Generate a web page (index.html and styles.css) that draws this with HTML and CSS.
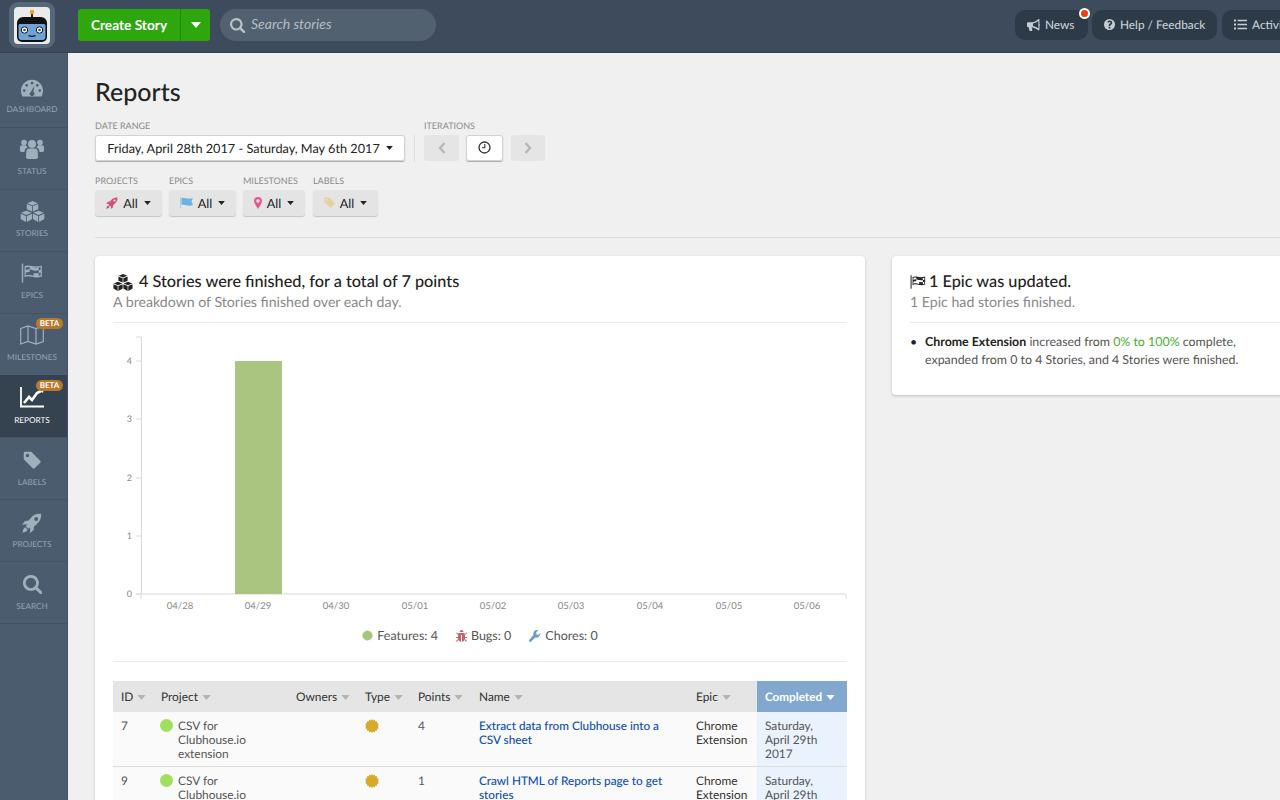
FILE: index.html
```html
<!DOCTYPE html>
<html lang="en">
<head>
<meta charset="utf-8">
<title>Reports</title>
<link rel="stylesheet" href="styles.css">
</head>
<body>
<svg class="sprite" width="0" height="0">
  <defs>
    <symbol id="i-rocket" viewBox="0 0 24 24"><path d="M23 1c-5-.6-9.500 1-13 5.500L8 9 3.500 9.500 0 14l5-.5 1 .8-1.500 1.500 3 3 1.500-1.500.8 1L9.500 24l4.500-3.500.5-4.500 2.500-2C21.500 10.500 23.500 6 23 1zM17 9.500a2.300 2.300 0 1 1 0-4.600 2.300 2.300 0 0 1 0 4.600zM4 17c-2 1-3 3.500-3.500 6.500C3.500 23 6 22 7 20z"/></symbol>
    <symbol id="i-cubes" viewBox="0 0 28 24"><path d="M14 0l6 2.500L14 5 8 2.500zM7.500 3.500L13.500 6v6l-6-2.500zM20.500 3.500L14.500 6v6l6-2.500zM7 11l6 2.500L7 16l-6-2.500zM.5 14.500L6.500 17v7l-6-3.500zM13.500 14.500L7.500 17v7l6-3.500zM21 11l6 2.500L21 16l-6-2.500zM14.500 14.500L20.500 17v7l-6-3.500zM27.500 14.500L21.500 17v7l6-3.500z"/></symbol>
    <symbol id="i-flag" viewBox="0 0 28 24"><path fill-rule="evenodd" d="M1 0h1.800v24H1zM4.500 3.500C10 0 15 6 26.500 2.500v14C17 20 10 13.500 4.500 17.500zM6 5v3.300c2-1 3.500-1.200 5-1V4.400C9.400 4.100 7.800 4.200 6 5zM11 7.300v3.500c2 .3 3.500 1 5 1.300V8.700c-1.700-.4-3.300-1.100-5-1.400zM16 8.700v3.400c2.300.4 4.500.4 6.500-.1V8.600c-2 .5-4.300.5-6.500.1zM22.500 8.600c1-.2 1.700-.4 2.500-.7V4.500c-.8.300-1.600.5-2.500.7zM16 5.300c2 .4 4 .5 6.500 0v-.2C20 5.500 18 5.300 16 5zM6 11.600v3.400c1.800-.8 3.400-1 5-.9v-3.300c-1.700-.2-3.200 0-5 .8zM16 12.100c-1.700-.3-3.300-1-5-1.300v3.300c1.700.3 3.300 1 5 1.400zM22.500 12v3.500c.9-.1 1.700-.4 2.500-.6v-3.500c-.8.300-1.600.5-2.500.6z"/></symbol>
    <symbol id="i-tag" viewBox="0 0 24 24"><path fill-rule="evenodd" d="M1 2.500A1.500 1.500 0 0 1 2.500 1H11l12 12c.7.700.7 1.800 0 2.500L15.500 23c-.7.700-1.800.7-2.500 0L1 11zM6 8.300a2.300 2.300 0 1 0 0-4.600 2.300 2.300 0 0 0 0 4.600z"/></symbol>
    <symbol id="i-search" viewBox="0 0 24 24"><path d="M10 0a10 10 0 1 0 5.700 18.200l5.300 5.300a1.900 1.900 0 0 0 2.700-2.700l-5.300-5.300A10 10 0 0 0 10 0zm0 3.400a6.600 6.600 0 1 1 0 13.200 6.600 6.600 0 0 1 0-13.200z"/></symbol>
    <symbol id="i-burst" viewBox="0 0 24 24"><path d="M12 0l2 2.600L16.600 1l1 3 3.100-.1-.1 3.100 3 1-1.600 2.600L24 12l-2 1.400 1.600 2.600-3 1 .1 3.100-3.100-.1-1 3-2.600-1.600L12 24l-2-2.600L7.400 23l-1-3-3.100.1.100-3.100-3-1L2 13.400 0 12l2-1.400L.4 8l3-1-.1-3.100 3.100.1 1-3L10 2.600z"/></symbol>
    <symbol id="i-caret" viewBox="0 0 10 6"><path d="M0 0h10L5 6z"/></symbol>
  </defs>
</svg>

<header class="topbar">
  <div class="logo">
    <div class="logo-tile">
      <svg class="logo-robot" viewBox="0 0 36 37" width="36" height="37">
        <rect x="17" y="6" width="2" height="5" fill="#222"/>
        <circle cx="18" cy="5" r="2.300" fill="#f39a2b"/>
        <path d="M9 10h18a6 6 0 0 1 6 6v14a5 5 0 0 1-5 5H8a5 5 0 0 1-5-5V16a6 6 0 0 1 6-6z" fill="#111"/>
        <path d="M6 17h24a1.500 1.500 0 0 1 1.500 1.500V30a3 3 0 0 1-3 3h-21a3 3 0 0 1-3-3V18.500A1.500 1.500 0 0 1 6 17z" fill="#6fa3d8"/>
        <circle cx="10.500" cy="23" r="3.200" fill="#fff" stroke="#111" stroke-width="1"/>
        <circle cx="25.500" cy="23" r="3.200" fill="#fff" stroke="#111" stroke-width="1"/>
        <circle cx="10.500" cy="23" r="1.300" fill="#355"/>
        <circle cx="25.500" cy="23" r="1.300" fill="#355"/>
        <path d="M14.500 28.500c2 1 5 1 7 0" fill="none" stroke="#111" stroke-width="1.200"/>
      </svg>
    </div>
  </div>
  <div class="create">
    <span class="create-label">Create Story</span>
    <span class="create-drop"><svg class="caret-white" width="10" height="6"><use href="#i-caret"/></svg></span>
  </div>
  <div class="search">
    <svg class="search-icon" width="15" height="15"><use href="#i-search"/></svg>
    <span>Search stories</span>
  </div>
  <div class="top-right">
    <div class="pill pill-news">
      <svg class="pill-icon" width="13" height="12" viewBox="0 0 24 22"><path d="M23 8.500V1.500C23 .700 22.300 0 21.500 0c-.4 0-.8.200-1 .4C18 2.800 14 6 9 6H2C1 6 0 7 0 8v5c0 1 1 2 2 2h1l1.500 6c.100.500.600 1 1.200 1h3c.8 0 1.400-.900 1.100-1.600L8.500 15c4.700.300 9.300 3.400 12 5.600.2.200.6.400 1 .4.800 0 1.500-.7 1.500-1.500v-7c1-.3 1-3.700 0-4zM21 17.300c-2.500-1.900-6-4-10-4.600V8.300c4-.6 7.500-2.700 10-4.600z"/></svg>
      News
      <span class="dot"></span>
    </div>
    <div class="pill pill-help">
      <svg class="pill-icon" width="11" height="11" viewBox="0 0 24 24"><path fill-rule="evenodd" d="M12 0a12 12 0 1 0 0 24 12 12 0 0 0 0-24zM10 17h4v3.500h-4zM12.300 3.500c3.200 0 5.700 1.900 5.700 4.800 0 2.300-1.300 3.400-2.700 4.300-1 .6-1.400 1-1.400 2.400h-3.700c0-2.800.7-3.900 2.400-5 1-.6 1.700-1 1.700-1.900 0-.9-.8-1.500-1.900-1.500-1.200 0-2 .7-2.600 1.700L7.300 6.600C8.400 4.700 10 3.500 12.300 3.500z"/></svg>
      Help / Feedback
    </div>
    <div class="pill pill-activity">
      <svg class="pill-icon" width="13" height="11" viewBox="0 0 26 22"><path d="M0 1h4v4H0zM7 1.500h19v3H7zM0 9h4v4H0zM7 9.500h19v3H7zM0 17h4v4H0zM7 17.500h19v3H7z"/></svg>
      Activity
    </div>
  </div>
</header>

<div class="shell">
  <nav class="sidebar">
    <a class="nav-item">
      <svg class="nav-icon" width="22" height="20" viewBox="0 0 24 20"><path fill-rule="evenodd" d="M12 1C5.400 1 0 6.400 0 13c0 2.300.6 4.400 1.700 6.200h20.600C23.400 17.400 24 15.300 24 13 24 6.400 18.600 1 12 1zM12 3.300a1.500 1.500 0 1 1 0 3 1.500 1.500 0 0 1 0-3zM6.200 5.600a1.500 1.500 0 1 1 0 3 1.500 1.500 0 0 1 0-3zM17.800 5.600a1.500 1.500 0 1 1 0 3 1.500 1.500 0 0 1 0-3zM3.500 11.300a1.500 1.500 0 1 1 0 3 1.500 1.500 0 0 1 0-3zM20.500 11.300a1.500 1.500 0 1 1 0 3 1.500 1.500 0 0 1 0-3zM14.700 7.500l-1.300 6.800a2.500 2.500 0 1 1-2.700 0z"/></svg>
      <span>Dashboard</span>
    </a>
    <a class="nav-item">
      <svg class="nav-icon" width="24" height="20" viewBox="0 0 24 20"><circle cx="12" cy="5" r="4"/><circle cx="4" cy="3.500" r="2.800"/><circle cx="20" cy="3.500" r="2.800"/><path d="M6.500 11a3 3 0 0 1 3-1.500h5a3 3 0 0 1 3 1.500l.5 7c0 1-.8 2-2 2H8c-1.200 0-2-1-2-2zM0 8c0-1 1-1.800 2-1.800h4c.4 1 1 1.700 1.800 2.400-1.800.4-3 1.700-3.200 3.300l-.1 1H1.500C.700 12.900 0 12.200 0 11.500zM24 8c0-1-1-1.800-2-1.800h-4c-.4 1-1 1.700-1.800 2.400 1.800.4 3 1.700 3.200 3.300l.1 1h3c.8 0 1.500-.7 1.500-1.400z"/></svg>
      <span>Status</span>
    </a>
    <a class="nav-item">
      <svg class="nav-icon" width="25" height="21"><use href="#i-cubes"/></svg>
      <span>Stories</span>
    </a>
    <a class="nav-item">
      <svg class="nav-icon" width="22" height="20"><use href="#i-flag"/></svg>
      <span>Epics</span>
    </a>
    <a class="nav-item">
      <svg class="nav-icon nav-map" width="24" height="20" viewBox="0 0 24 20"><path d="M.7 3.500L8 1l8 2.500L23.300 1v15.500L16 19l-8-2.500L.7 19zM8 1v15.500M16 3.500V19" fill="none" stroke-width="1.200"/></svg>
      <span>Milestones</span>
      <b class="beta">BETA</b>
    </a>
    <a class="nav-item nav-active">
      <svg class="nav-icon nav-chart" width="24" height="21" viewBox="0 0 24 21"><path d="M1 0v19.500h23" fill="none" stroke="#fff" stroke-width="1.800"/><path d="M4 16l5-6 3 3 5-7 4-2" fill="none" stroke="#fff" stroke-width="2.600"/><path d="M18 2l6-2-1 6z" fill="#fff"/></svg>
      <span>Reports</span>
      <b class="beta">BETA</b>
    </a>
    <a class="nav-item">
      <svg class="nav-icon" width="18" height="18"><use href="#i-tag"/></svg>
      <span>Labels</span>
    </a>
    <a class="nav-item">
      <svg class="nav-icon" width="20" height="20"><use href="#i-rocket"/></svg>
      <span>Projects</span>
    </a>
    <a class="nav-item">
      <svg class="nav-icon" width="19" height="19"><use href="#i-search"/></svg>
      <span>Search</span>
    </a>
  </nav>

  <main class="main">
    <h1 class="page-title">Reports</h1>

    <div class="filters-top">
      <div class="field">
        <label class="field-label">Date Range</label>
        <button class="btn btn-white btn-date">Friday, April 28th 2017 - Saturday, May 6th 2017 <svg class="caret" width="7" height="4"><use href="#i-caret"/></svg></button>
      </div>
      <div class="vr"></div>
      <div class="field">
        <label class="field-label">Iterations</label>
        <div class="iter-row">
          <button class="btn btn-off btn-prev"><svg width="8" height="12" viewBox="0 0 8 12"><path d="M6.500 1L2 6l4.500 5" fill="none" stroke="#b5b5b5" stroke-width="2.200"/></svg></button>
          <button class="btn btn-white btn-clock"><svg width="13" height="13" viewBox="0 0 13 13"><circle cx="6.500" cy="6.500" r="5.500" fill="none" stroke="#333" stroke-width="1.300"/><path d="M6.800 3v3.800H4" fill="none" stroke="#333" stroke-width="1.100"/></svg></button>
          <button class="btn btn-off btn-next"><svg width="8" height="12" viewBox="0 0 8 12"><path d="M1.500 1L6 6l-4.500 5" fill="none" stroke="#b5b5b5" stroke-width="2.200"/></svg></button>
        </div>
      </div>
    </div>

    <div class="filters-bottom">
      <div class="field field-projects">
        <label class="field-label">Projects</label>
        <button class="btn btn-gray"><svg class="ic-pink" width="12" height="12"><use href="#i-rocket"/></svg> All <svg class="caret" width="7" height="4"><use href="#i-caret"/></svg></button>
      </div>
      <div class="field field-epics">
        <label class="field-label">Epics</label>
        <button class="btn btn-gray"><svg width="13" height="11" viewBox="0 0 13 11"><path d="M0 0h1v11H0z" fill="#a8cde8"/><path d="M1.500 1C5 0 8 3 13 1l-1.500 3.500L13 8c-5 2-8-1-11.500 0z" fill="#6cb2e4"/></svg> All <svg class="caret" width="7" height="4"><use href="#i-caret"/></svg></button>
      </div>
      <div class="field field-milestones">
        <label class="field-label">Milestones</label>
        <button class="btn btn-gray"><svg width="8" height="12" viewBox="0 0 8 12"><path fill-rule="evenodd" d="M4 0a4 4 0 0 0-4 4c0 2.500 3 6 4 8 1-2 4-5.500 4-8a4 4 0 0 0-4-4zm0 2.200a1.800 1.800 0 1 1 0 3.600 1.800 1.800 0 0 1 0-3.600z" fill="#e5588c"/></svg> All <svg class="caret" width="7" height="4"><use href="#i-caret"/></svg></button>
      </div>
      <div class="field field-labels">
        <label class="field-label">Labels</label>
        <button class="btn btn-gray"><svg class="ic-tan" width="11" height="11"><use href="#i-tag"/></svg> All <svg class="caret" width="7" height="4"><use href="#i-caret"/></svg></button>
      </div>
    </div>

    <hr class="rule">

    <div class="cards">
      <section class="card card-main">
        <h2 class="card-title"><svg class="title-icon" width="20" height="17"><use href="#i-cubes"/></svg> 4 Stories were finished, for a total of 7 points</h2>
        <p class="card-sub">A breakdown of Stories finished over each day.</p>
        <hr class="card-rule">
        <svg class="chart" width="734" height="290" viewBox="0 0 734 290">
          <path d="M23 14h5.500v257H23M28.500 271H733" fill="none" stroke="#d9d9d9" stroke-width="1"/>
          <path d="M23 38h5M23 96h5M23 155h5M23 213h5M23 271h5" stroke="#d9d9d9" fill="none"/>
          <path d="M28 271v5M733 271v5" stroke="#d9d9d9" fill="none"/>
          <rect x="122" y="38" width="47" height="233" fill="#a9c57f"/>
          <g class="chart-y">
            <text x="19" y="41">4</text><text x="19" y="99">3</text><text x="19" y="158">2</text><text x="19" y="216">1</text><text x="19" y="274">0</text>
          </g>
          <g class="chart-x">
            <text x="67" y="286">04/28</text><text x="145" y="286">04/29</text><text x="223" y="286">04/30</text><text x="302" y="286">05/01</text><text x="380" y="286">05/02</text><text x="458" y="286">05/03</text><text x="537" y="286">05/04</text><text x="616" y="286">05/05</text><text x="694" y="286">05/06</text>
          </g>
        </svg>
        <div class="legend">
          <span class="legend-item"><svg class="ic-feature" width="11" height="11"><use href="#i-burst"/></svg>Features: 4</span>
          <span class="legend-item"><svg width="11" height="12" viewBox="0 0 22 24"><path d="M7 4a4 4 0 0 1 8 0zM5 6h12v1l1 1v10c0 3-3 5-6 5.500V10h-2v13.500C7 23 4 21 4 18V8zM0 6l1.500-1L5 9l-1 1zM22 6l-1.500-1L17 9l1 1zM0 14h4v2H0zM18 14h4v2h-4zM0 22l4-4 1 1-3.500 5zM22 22l-4-4-1 1 3.500 5z" fill="#c0686b"/></svg>Bugs: 0</span>
          <span class="legend-item"><svg width="12" height="12" viewBox="0 0 24 24"><path d="M23.500 5.500L19 10l-4-1-1-4 4.500-4.500C14.500-.5 10.300 1 9 5c-.5 1.500-.4 3 .1 4.500L.9 19.600a2.500 2.500 0 0 0 0 3.500 2.500 2.500 0 0 0 3.500 0l8.100-8.200c1.500.5 3 .6 4.500.1 4-1.300 5.500-5.500 6.500-9.500z" fill="#6b9cc7"/></svg>Chores: 0</span>
        </div>
        <hr class="card-rule">
        <table class="stories">
          <colgroup>
            <col class="c-id"><col class="c-project"><col class="c-owners"><col class="c-type"><col class="c-points"><col class="c-name"><col class="c-epic"><col class="c-done">
          </colgroup>
          <thead>
            <tr>
              <th>ID<svg class="sort" width="9" height="5"><use href="#i-caret"/></svg></th>
              <th>Project<svg class="sort" width="9" height="5"><use href="#i-caret"/></svg></th>
              <th>Owners<svg class="sort" width="9" height="5"><use href="#i-caret"/></svg></th>
              <th>Type<svg class="sort" width="9" height="5"><use href="#i-caret"/></svg></th>
              <th>Points<svg class="sort" width="9" height="5"><use href="#i-caret"/></svg></th>
              <th>Name<svg class="sort" width="9" height="5"><use href="#i-caret"/></svg></th>
              <th>Epic<svg class="sort" width="9" height="5"><use href="#i-caret"/></svg></th>
              <th class="th-done">Completed<svg class="sort sort-on" width="9" height="5"><use href="#i-caret"/></svg></th>
            </tr>
          </thead>
          <tbody>
            <tr>
              <td>7</td>
              <td><div class="proj"><i class="proj-dot"></i><span>CSV for Clubhouse.io extension</span></div></td>
              <td></td>
              <td><svg class="ic-burst" width="14" height="14"><use href="#i-burst"/></svg></td>
              <td>4</td>
              <td><a class="story-link">Extract data from Clubhouse into a CSV sheet</a></td>
              <td class="td-epic">Chrome Extension</td>
              <td class="td-done">Saturday, April 29th 2017</td>
            </tr>
            <tr>
              <td>9</td>
              <td><div class="proj"><i class="proj-dot"></i><span>CSV for Clubhouse.io extension</span></div></td>
              <td></td>
              <td><svg class="ic-burst" width="14" height="14"><use href="#i-burst"/></svg></td>
              <td>1</td>
              <td><a class="story-link">Crawl HTML of Reports page to get stories</a></td>
              <td class="td-epic">Chrome Extension</td>
              <td class="td-done">Saturday, April 29th 2017</td>
            </tr>
          </tbody>
        </table>
      </section>

      <section class="card card-side">
        <h2 class="card-title"><svg class="title-icon" width="16" height="14"><use href="#i-flag"/></svg> 1 Epic was updated.</h2>
        <p class="card-sub">1 Epic had stories finished.</p>
        <hr class="card-rule">
        <ul class="epic-list">
          <li><strong>Chrome Extension</strong> increased from <em>0% to 100%</em> complete, expanded from 0 to 4 Stories, and 4 Stories were finished.</li>
        </ul>
      </section>
    </div>
  </main>
</div>
</body>
</html>
```

FILE: styles.css
```css
* { box-sizing: border-box; }
html, body { margin: 0; height: 800px; overflow: hidden; }
body { font-family: Lato, "Open Sans", sans-serif; color: #222; background: #f0f0f0; text-rendering: geometricPrecision; }
.sprite { position: absolute; }

.topbar { height: 53px; display: flex; align-items: flex-start; background: #3d4b5c; border-bottom: 1px solid #35414f; }
.logo { width: 46px; height: 46px; margin: 2px 0 0 9px; padding: 5px; background: #56677a; border-radius: 9px; }
.logo-tile { width: 36px; height: 37px; background: #e9ebed; border-radius: 4px; }
.logo-robot { display: block; }
.create { display: flex; height: 32px; margin: 9px 0 0 23px; color: #fff; background: #2ea70f; border-radius: 3px; font-size: 13.7px; font-weight: 700; }
.create-label { width: 103px; line-height: 32px; text-align: center; border-right: 1px solid #1f8a08; }
.create-drop { width: 29px; display: flex; align-items: center; justify-content: center; }
.caret-white { fill: #fff; }
.search { width: 216px; height: 32px; margin: 9px 0 0 10px; padding: 0 0 3px 10px; display: flex; align-items: center; gap: 6px; background: #52616f; border-radius: 16px; color: #b4bcc4; font-size: 14px; font-style: italic; }
.search-icon { fill: #b9c1c9; margin-top: 3px; }
.top-right { margin-left: auto; display: flex; gap: 4px; margin-top: 10px; flex: none; width: 265px; }
.pill { position: relative; height: 30px; padding: 0 12px 1px; display: flex; align-items: center; flex: none; gap: 5px; background: #2d3a47; border-radius: 10px; color: #c6ced5; font-size: 11.8px; font-weight: 500; white-space: nowrap; }
.pill-news { width: 73px; }
.pill-help { width: 125px; }
.pill-activity { margin-left: 1px; }
.pill-icon { fill: #c6ced5; flex: none; }
.dot { position: absolute; top: -2px; right: -2px; width: 7px; height: 7px; background: #e8430f; border: 2px solid #fff; border-radius: 50%; box-sizing: content-box; }

.shell { display: flex; height: 747px; }
.sidebar { width: 68px; flex: none; background: #4b5c6f; border-right: 1px solid #435264; }
.nav-item { position: relative; display: flex; flex-direction: column; align-items: center; height: 62px; padding: 11px 3px 0 0; border-bottom: 1px solid #435264; color: #95a5b3; font-size: 8.2px; text-transform: uppercase; }
.nav-item:first-child { height: 75px; padding-top: 25px; }
.nav-item span { position: absolute; bottom: 12px; left: 0; right: 3px; text-align: center; line-height: 11px; }
.nav-icon { fill: #9fb0bd; }
.nav-map { stroke: #9fb0bd; }
.nav-chart { fill: #fff; }
.nav-active { background: #35424f; color: #fff; box-shadow: 0 -1px #35424f; }
.nav-active span, .nav-active ~ .nav-item span { bottom: 11px; }
.nav-active ~ .nav-item { padding-top: 13px; }
.beta { position: absolute; top: 4px; right: 4px; width: 27px; height: 11px; background: #b9782a; border-radius: 6px; color: #fff; font-size: 8px; font-weight: 700; line-height: 11px; text-align: center; }

.main { flex: 1; min-width: 0; padding: 0 0 0 27px; overflow: hidden; }
.page-title { margin: 23px 0 0; font-size: 25px; line-height: 32px; font-weight: 500; color: #222; }
.field-label { display: block; height: 11px; line-height: 11px; color: #8a8a8a; font-size: 9px; text-transform: uppercase; white-space: nowrap; }
.filters-top { display: flex; margin-top: 12px; }
.vr { width: 1px; height: 27px; margin: 15px 9px 0; background: #ddd; }
.btn { display: flex; align-items: center; justify-content: center; padding: 0 0 1px; border: 0; border-radius: 3px; font-family: inherit; font-size: 12.7px; color: #222; white-space: nowrap; text-rendering: geometricPrecision; }
.btn-white { background: #fff; box-shadow: 0 0 0 1px #d2d2d2 inset, 0 1px 1px #aaa; }
.btn-off { background: #e5e5e5; }
.btn-gray { height: 26px; gap: 5px; background: #e4e4e4; box-shadow: 0 1px 1px #c4c4c4; }
.btn-date { width: 310px; height: 26px; margin-top: 4px; gap: 5px; }
.iter-row { display: flex; margin-top: 4px; }
.btn-prev { width: 35px; height: 26px; }
.btn-clock { width: 37px; height: 26px; margin: 0 8px 0 7px; }
.btn-next { width: 34px; height: 26px; }
.caret { fill: #222; margin-left: 1px; }
.filters-bottom { display: flex; margin-top: 13px; }
.field-projects { width: 74px; }
.field-epics { width: 74px; }
.field-milestones { width: 70px; }
.field-projects .btn, .field-epics .btn { width: 67px; margin-top: 4px; }
.field-milestones .btn { width: 62px; margin-top: 4px; }
.field-labels .btn { width: 65px; margin-top: 4px; }
.ic-pink { fill: #d4517a; }
.ic-tan { fill: #e6d09c; }
.rule { margin: 21px 0 18px; border: 0; height: 1px; background: #dcdcdc; }

.cards { display: flex; align-items: flex-start; gap: 27px; }
.card { flex: none; background: #fff; border-radius: 4px; box-shadow: 0 1px 3px rgba(0,0,0,.22); padding: 16px 18px 0; }
.card-main { width: 770px; height: 600px; }
.card-side { width: 420px; height: 139px; }
.card-title { margin: 0; display: flex; align-items: center; gap: 6px; font-size: 16.25px; line-height: 20px; font-weight: 500; color: #222; }
.card-side .card-title { gap: 3px; }
.title-icon { fill: #222; flex: none; }
.card-sub { margin: 1px 0 0; font-size: 14.15px; line-height: 20px; color: #888; }
.card-rule { margin: 9px 0 0; border: 0; height: 1px; background: #ebebeb; }
.chart { display: block; overflow: visible; font-family: Lato, sans-serif; }
.chart-y text { font-size: 9px; fill: #888; text-anchor: end; }
.chart-x text { font-size: 9.5px; fill: #888; text-anchor: middle; }
.legend { display: flex; justify-content: center; gap: 18px; margin-top: 14px; font-size: 12.5px; line-height: 17px; color: #555; }
.legend-item { display: flex; align-items: center; gap: 4px; }
.ic-feature { fill: #a5c67a; }
.legend + .card-rule { margin-top: 17px; }
.stories { width: 734px; margin-top: 19px; border-collapse: collapse; table-layout: fixed; font-size: 11.9px; line-height: 14px; color: #555; }
.c-id { width: 40px; } .c-project { width: 135px; } .c-owners { width: 69px; } .c-type { width: 53px; } .c-points { width: 61px; } .c-name { width: 217px; } .c-epic { width: 69px; } .c-done { width: 90px; }
.stories th { height: 31px; padding: 0 0 0 8px; background: #e5e5e5; color: #333; font-weight: 400; text-align: left; white-space: nowrap; }
.stories td { padding: 7px 8px 5px; vertical-align: top; background: #fafafa; border-bottom: 1px solid #ddd; }
.sort { fill: #b4b4b4; margin-left: 4px; vertical-align: 1px; }
.stories .th-done { background: #82a8d0; color: #fff; font-weight: 700; font-size: 11.7px; }
.sort-on { fill: #fff; }
.proj { display: flex; gap: 5px; margin-left: -1px; }
.proj-dot { flex: none; width: 13px; height: 13px; background: #a0e060; border-radius: 50%; }
.ic-burst { fill: #d9a92c; display: block; }
.story-link { color: #0e4fb0; font-weight: 500; font-size: 11.75px; }
.stories .td-epic { color: #333; padding-right: 0; }
.stories .td-done { background: #eaf3fd; }

.epic-list { margin: 10px 0 0; padding: 0 0 0 15px; font-size: 12.4px; line-height: 18px; color: #555; width: 340px; list-style: none; }
.epic-list li { position: relative; }
.epic-list li::before { content: "\2022"; position: absolute; left: -15px; color: #222; }
.epic-list strong { color: #222; font-weight: 700; }
.epic-list em { color: #4cae2c; font-style: normal; }
```
